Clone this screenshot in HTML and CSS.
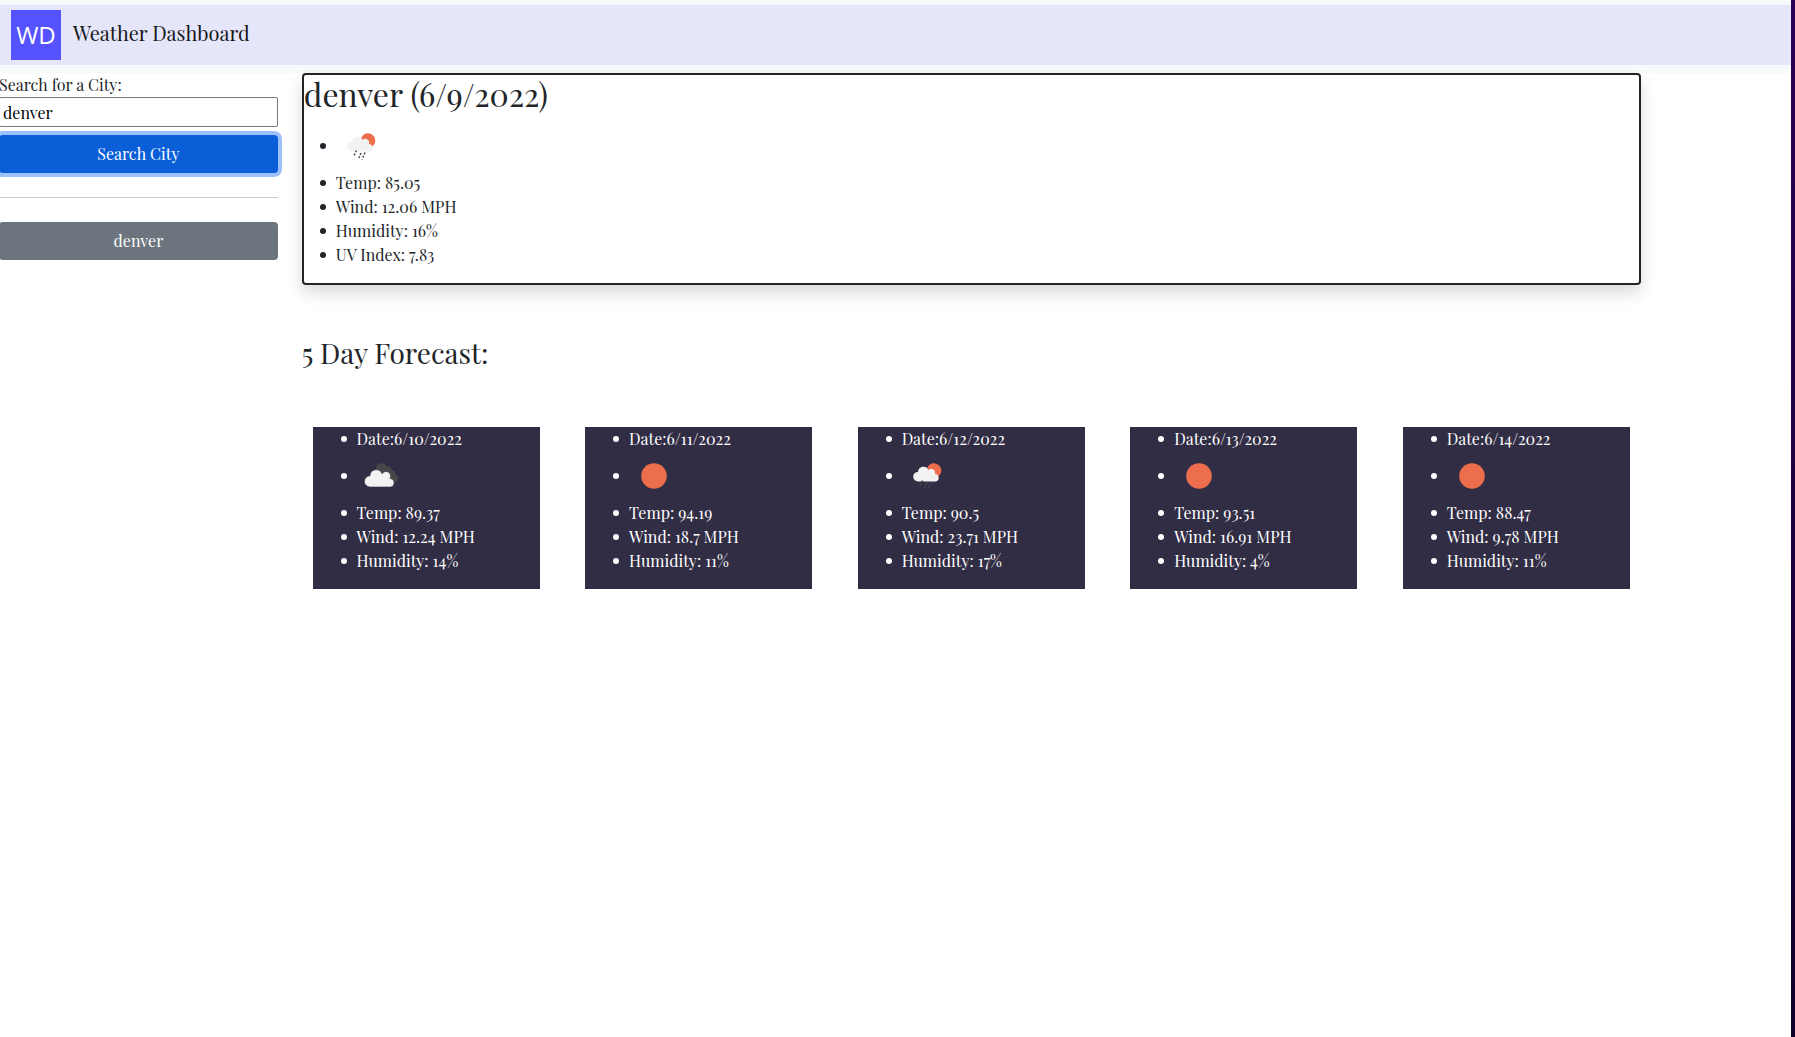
FILE: index.html
```html
<!DOCTYPE html>
<html lang="en">
<head>
<meta charset="utf-8">
<title>Weather Dashboard</title>
<link rel="stylesheet" href="styles.css">
</head>
<body>
<svg class="sprite" aria-hidden="true">
  <symbol id="clouds" viewBox="0 0 50 50">
    <path fill="#484848" d="M19 18a5.500 5.500 0 0 1 10.500-2.500 4 4 0 0 1 5 4 4 4 0 0 1 4 4 4 4 0 0 1 0 7.500H32z"/>
    <path fill="#f2f2f2" stroke="#312d44" stroke-width=".6" d="M13 36a5.500 5.500 0 0 1 0-11.200 6.200 6.200 0 0 1 12-2 4.500 4.500 0 0 1 8 4.600 4.400 4.400 0 0 1 1 8.600z"/>
  </symbol>
  <symbol id="sun" viewBox="0 0 50 50">
    <circle cx="25" cy="25" r="12.800" fill="#ec6e4c"/>
  </symbol>
  <symbol id="rain" viewBox="0 0 50 50">
    <path fill="#ec6e4c" d="M25 17.500a7.300 7.300 0 1 1 10.500 8.500z"/>
    <path fill="#f2f2f2" d="M16 30.500a4.800 4.800 0 0 1 0-9.600 5.500 5.500 0 0 1 10.500-2 4 4 0 0 1 6.500 4 3.900 3.900 0 0 1 1 7.600z"/>
    <path fill="none" stroke="#484848" stroke-width="1.500" stroke-dasharray="2 1.500" d="M20.500 29.500l-3 6M25 32l-2.500 6M29 31.500l-3 7"/>
  </symbol>
</svg>
<header class="site-header">
  <nav class="navbar">
    <span class="logo" aria-hidden="true">WD</span>
    <a class="brand" href="#">Weather Dashboard</a>
  </nav>
</header>
<div class="layout">
  <aside class="sidebar">
    <form>
      <label for="city">Search for a City:</label>
      <input id="city" type="text" value="denver">
      <button class="btn btn-primary" type="button">Search City</button>
    </form>
    <hr>
    <button class="btn btn-secondary" type="button">denver</button>
  </aside>
  <main class="content">
    <section class="current">
      <h1>denver (6/9/2022)</h1>
      <ul class="readings">
        <li><svg class="icon"><use href="#rain"/></svg></li>
        <li>Temp: 85.05</li>
        <li>Wind: 12.06 MPH</li>
        <li>Humidity: 16%</li>
        <li>UV Index: 7.83</li>
      </ul>
    </section>
    <h2>5 Day Forecast:</h2>
    <div class="forecast">
      <article class="day"><ul class="readings">
        <li>Date:6/10/2022</li>
        <li><svg class="icon"><use href="#clouds"/></svg></li>
        <li>Temp: 89.37</li>
        <li>Wind: 12.24 MPH</li>
        <li>Humidity: 14%</li>
      </ul></article>
      <article class="day"><ul class="readings">
        <li>Date:6/11/2022</li>
        <li><svg class="icon"><use href="#sun"/></svg></li>
        <li>Temp: 94.19</li>
        <li>Wind: 18.7 MPH</li>
        <li>Humidity: 11%</li>
      </ul></article>
      <article class="day"><ul class="readings">
        <li>Date:6/12/2022</li>
        <li><svg class="icon"><use href="#rain"/></svg></li>
        <li>Temp: 90.5</li>
        <li>Wind: 23.71 MPH</li>
        <li>Humidity: 17%</li>
      </ul></article>
      <article class="day"><ul class="readings">
        <li>Date:6/13/2022</li>
        <li><svg class="icon"><use href="#sun"/></svg></li>
        <li>Temp: 93.51</li>
        <li>Wind: 16.91 MPH</li>
        <li>Humidity: 4%</li>
      </ul></article>
      <article class="day"><ul class="readings">
        <li>Date:6/14/2022</li>
        <li><svg class="icon"><use href="#sun"/></svg></li>
        <li>Temp: 88.47</li>
        <li>Wind: 9.78 MPH</li>
        <li>Humidity: 11%</li>
      </ul></article>
    </div>
  </main>
</div>
</body>
</html>
```
FILE: styles.css
```css
* { box-sizing: border-box; }

html { background: #fff; }

body {
  margin: 0;
  min-height: 100vh;
  overflow-x: hidden;
  border-right: 4px solid;
  border-image: linear-gradient(#2a0055, #10002c) 0 4 0 0;
  color: #212529;
  font: 16px/24px "Playfair Display", "Liberation Serif", serif;
}

.sprite { display: none; }

.site-header {
  padding: 5px 0 8px;
  background: #f8f9fa;
}

.navbar {
  display: flex;
  align-items: center;
  gap: 12px;
  height: 60px;
  padding: 0 11px;
  background: #e6e6fa;
}

.logo {
  width: 50px;
  height: 50px;
  background: #5552ff;
  color: #fff;
  font: 24px/50px "Open Sans", "Noto Sans", sans-serif;
  text-align: center;
}

.brand {
  padding-bottom: 5px;
  color: #16181b;
  font-size: 20px;
  text-decoration: none;
}

.layout {
  display: flex;
  margin: 0 -13px;
}

.sidebar {
  flex: 0 0 16.6667%;
  padding: 0 12px;
}

.content {
  flex: 0 0 75%;
  padding: 0 12px;
}

label { display: block; }

input {
  display: block;
  width: 100%;
  height: 30px;
  margin-bottom: 8px;
  padding: 1px 3px;
  border: 1px solid #767676;
  border-radius: 2px;
  color: #000;
  font: inherit;
}

.btn {
  display: block;
  width: 100%;
  height: 38px;
  border: 0;
  border-radius: 4px;
  color: #fff;
  font: inherit;
}

.btn-primary {
  background: #0a5fd9;
  box-shadow: 0 0 0 4px #9dc1fb;
}

.btn-secondary { background: #6c757d; }

hr {
  height: 1px;
  margin: 24px 0;
  border: 0;
  background: #c8c9ca;
}

h1, h2 {
  margin: 0;
  font-weight: 400;
}

h1 {
  margin-bottom: 8px;
  font-size: 32px;
  line-height: 38px;
}

h2 {
  margin: 51px 0 57px;
  font-size: 28px;
  line-height: 34px;
}

.current {
  border: 2px solid #212529;
  border-radius: 4px;
  box-shadow: 0 8px 16px rgba(0, 0, 0, 0.15);
}

.readings {
  margin: 0 0 16px;
  padding-left: 16px;
  list-style: none;
}

.readings li {
  display: flex;
  align-items: center;
  gap: 10px;
}

.readings li::before {
  content: "";
  width: 6px;
  height: 6px;
  border-radius: 50%;
  background: currentColor;
}

.icon {
  width: 50px;
  height: 50px;
}

.forecast {
  display: flex;
  justify-content: space-around;
  margin: 0 -12px;
}

.day {
  display: flow-root;
  width: 16.6667%;
  padding: 0 12px;
  background: #312d44;
  color: #fff;
}
```
